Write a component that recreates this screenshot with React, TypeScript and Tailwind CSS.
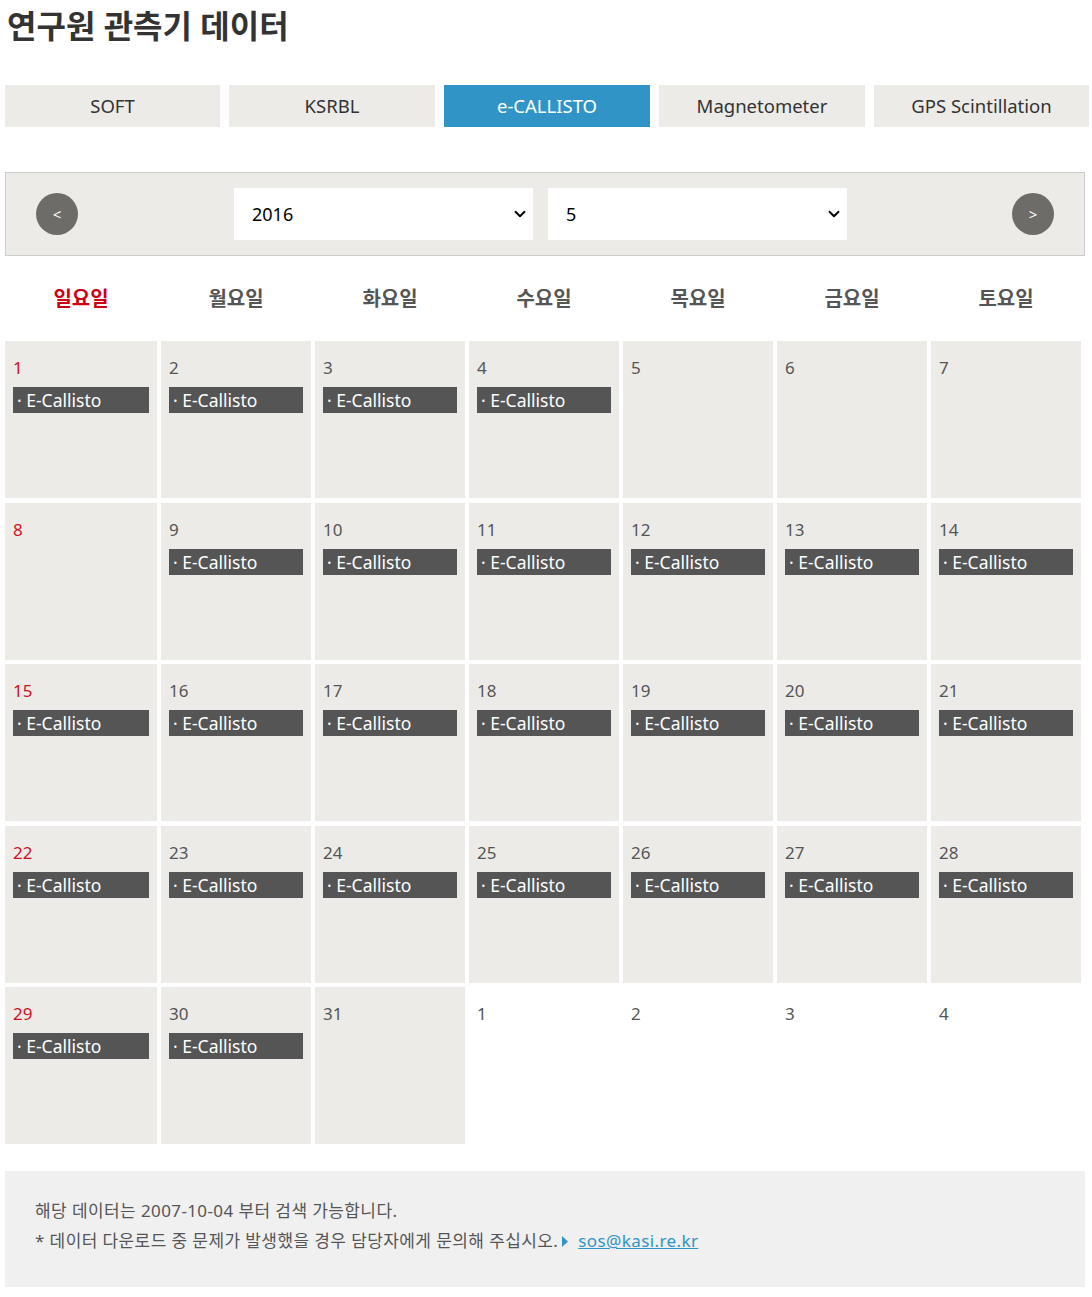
import { ChevronDown } from "lucide-react";

const FONT = "[font-family:'Noto_Sans','Noto_Sans_CJK_KR',sans-serif]";

const TABS = ["SOFT", "KSRBL", "e-CALLISTO", "Magnetometer", "GPS Scintillation"];
const WEEKDAYS = ["일요일", "월요일", "화요일", "수요일", "목요일", "금요일", "토요일"];

// May 2016: starts on Sunday, 31 days, trailing days of June fill the last week
const NO_DATA = new Set([5, 6, 7, 8, 31]);

type Cell = { day: number; inMonth: boolean };

const cells: Cell[] = [
  ...Array.from({ length: 31 }, (_, i) => ({ day: i + 1, inMonth: true })),
  ...[1, 2, 3, 4].map((d) => ({ day: d, inMonth: false })),
];

function DayCell({ cell, index }: { cell: Cell; index: number }) {
  const sunday = index % 7 === 0;
  const hasData = cell.inMonth && !NO_DATA.has(cell.day);

  return (
    <div className={`h-[157px] px-2 pt-4 ${cell.inMonth ? "bg-[#ecebe7]" : "bg-white"}`}>
      <p className={`text-[17px] leading-[22px] ${sunday && cell.inMonth ? "text-[#cc1122]" : "text-[#555]"}`}>
        {cell.day}
      </p>
      {hasData && (
        <div className="mt-[8px] h-[26px] bg-[#555555] pl-1 text-[17.5px] leading-[26px] text-white">
          · E-Callisto
        </div>
      )}
    </div>
  );
}

export default function App() {
  return (
    <div className={`${FONT} w-[1092px] bg-white pb-[10px] text-[#333]`}>
      <h1 className="pl-[7px] pt-[6px] text-[32px] font-bold leading-[40px] text-[#333]">연구원 관측기 데이터</h1>

      <nav className="mt-[39px] grid grid-cols-[215px_206px_206px_206px_215px] gap-[9px] pl-[5px]">
        {TABS.map((tab) => (
          <div
            key={tab}
            className={`flex h-[42px] items-center justify-center text-[18.5px] ${
              tab === "e-CALLISTO" ? "bg-[#3194c7] text-white" : "bg-[#ecebe7] text-[#333]"
            }`}
          >
            {tab}
          </div>
        ))}
      </nav>

      <div className="ml-[5px] mt-[45px] flex h-[84px] w-[1080px] items-center border border-[#cccccc] bg-[#ecebe7]">
        <button className="ml-[30px] flex h-[42px] w-[42px] items-center justify-center rounded-full bg-[#6d6c69] text-[15px] text-white">
          &lt;
        </button>
        <div className="ml-[156px] flex h-[52px] w-[299px] items-center justify-between bg-white pl-[18px] pr-[4px] text-[18px] text-black">
          <span>2016</span>
          <ChevronDown size={18} strokeWidth={2.5} />
        </div>
        <div className="ml-[15px] flex h-[52px] w-[299px] items-center justify-between bg-white pl-[18px] pr-[4px] text-[18px] text-black">
          <span>5</span>
          <ChevronDown size={18} strokeWidth={2.5} />
        </div>
        <button className="ml-auto mr-[30px] flex h-[42px] w-[42px] items-center justify-center rounded-full bg-[#6d6c69] text-[15px] text-white">
          &gt;
        </button>
      </div>

      <div className="grid grid-cols-[152px_repeat(6,150px)] gap-x-[4px] pl-[5px]">
        {WEEKDAYS.map((d, i) => (
          <div
            key={d}
            className={`flex h-[85px] items-center justify-center text-[20px] font-bold ${
              i === 0 ? "text-[#cc0011]" : "text-[#555]"
            }`}
          >
            {d}
          </div>
        ))}
      </div>

      <div className="grid grid-cols-[152px_repeat(6,150px)] gap-x-[4px] gap-y-[4.5px] pl-[5px]">
        {cells.map((c, i) => (
          <DayCell key={i} cell={c} index={i} />
        ))}
      </div>

      <div className="ml-[5px] mt-[27px] w-[1080px] bg-[#f0f0f0] px-[30px] pb-[31px] pt-[25px] text-[17px] leading-[30px] tracking-[0.4px] text-[#555]">
        <p>해당 데이터는 2007-10-04 부터 검색 가능합니다.</p>
        <p className="flex items-center">
          <span>* 데이터 다운로드 중 문제가 발생했을 경우 담당자에게 문의해 주십시오.</span>
          <svg width="6" height="11" viewBox="0 0 6 11" className="ml-[4px] mr-[10px]">
            <path d="M0 0 L6 5.5 L0 11 Z" fill="#3194c7" />
          </svg>
          <a href="#" className="text-[#3194c7] underline">
            sos@kasi.re.kr
          </a>
        </p>
      </div>
    </div>
  );
}
